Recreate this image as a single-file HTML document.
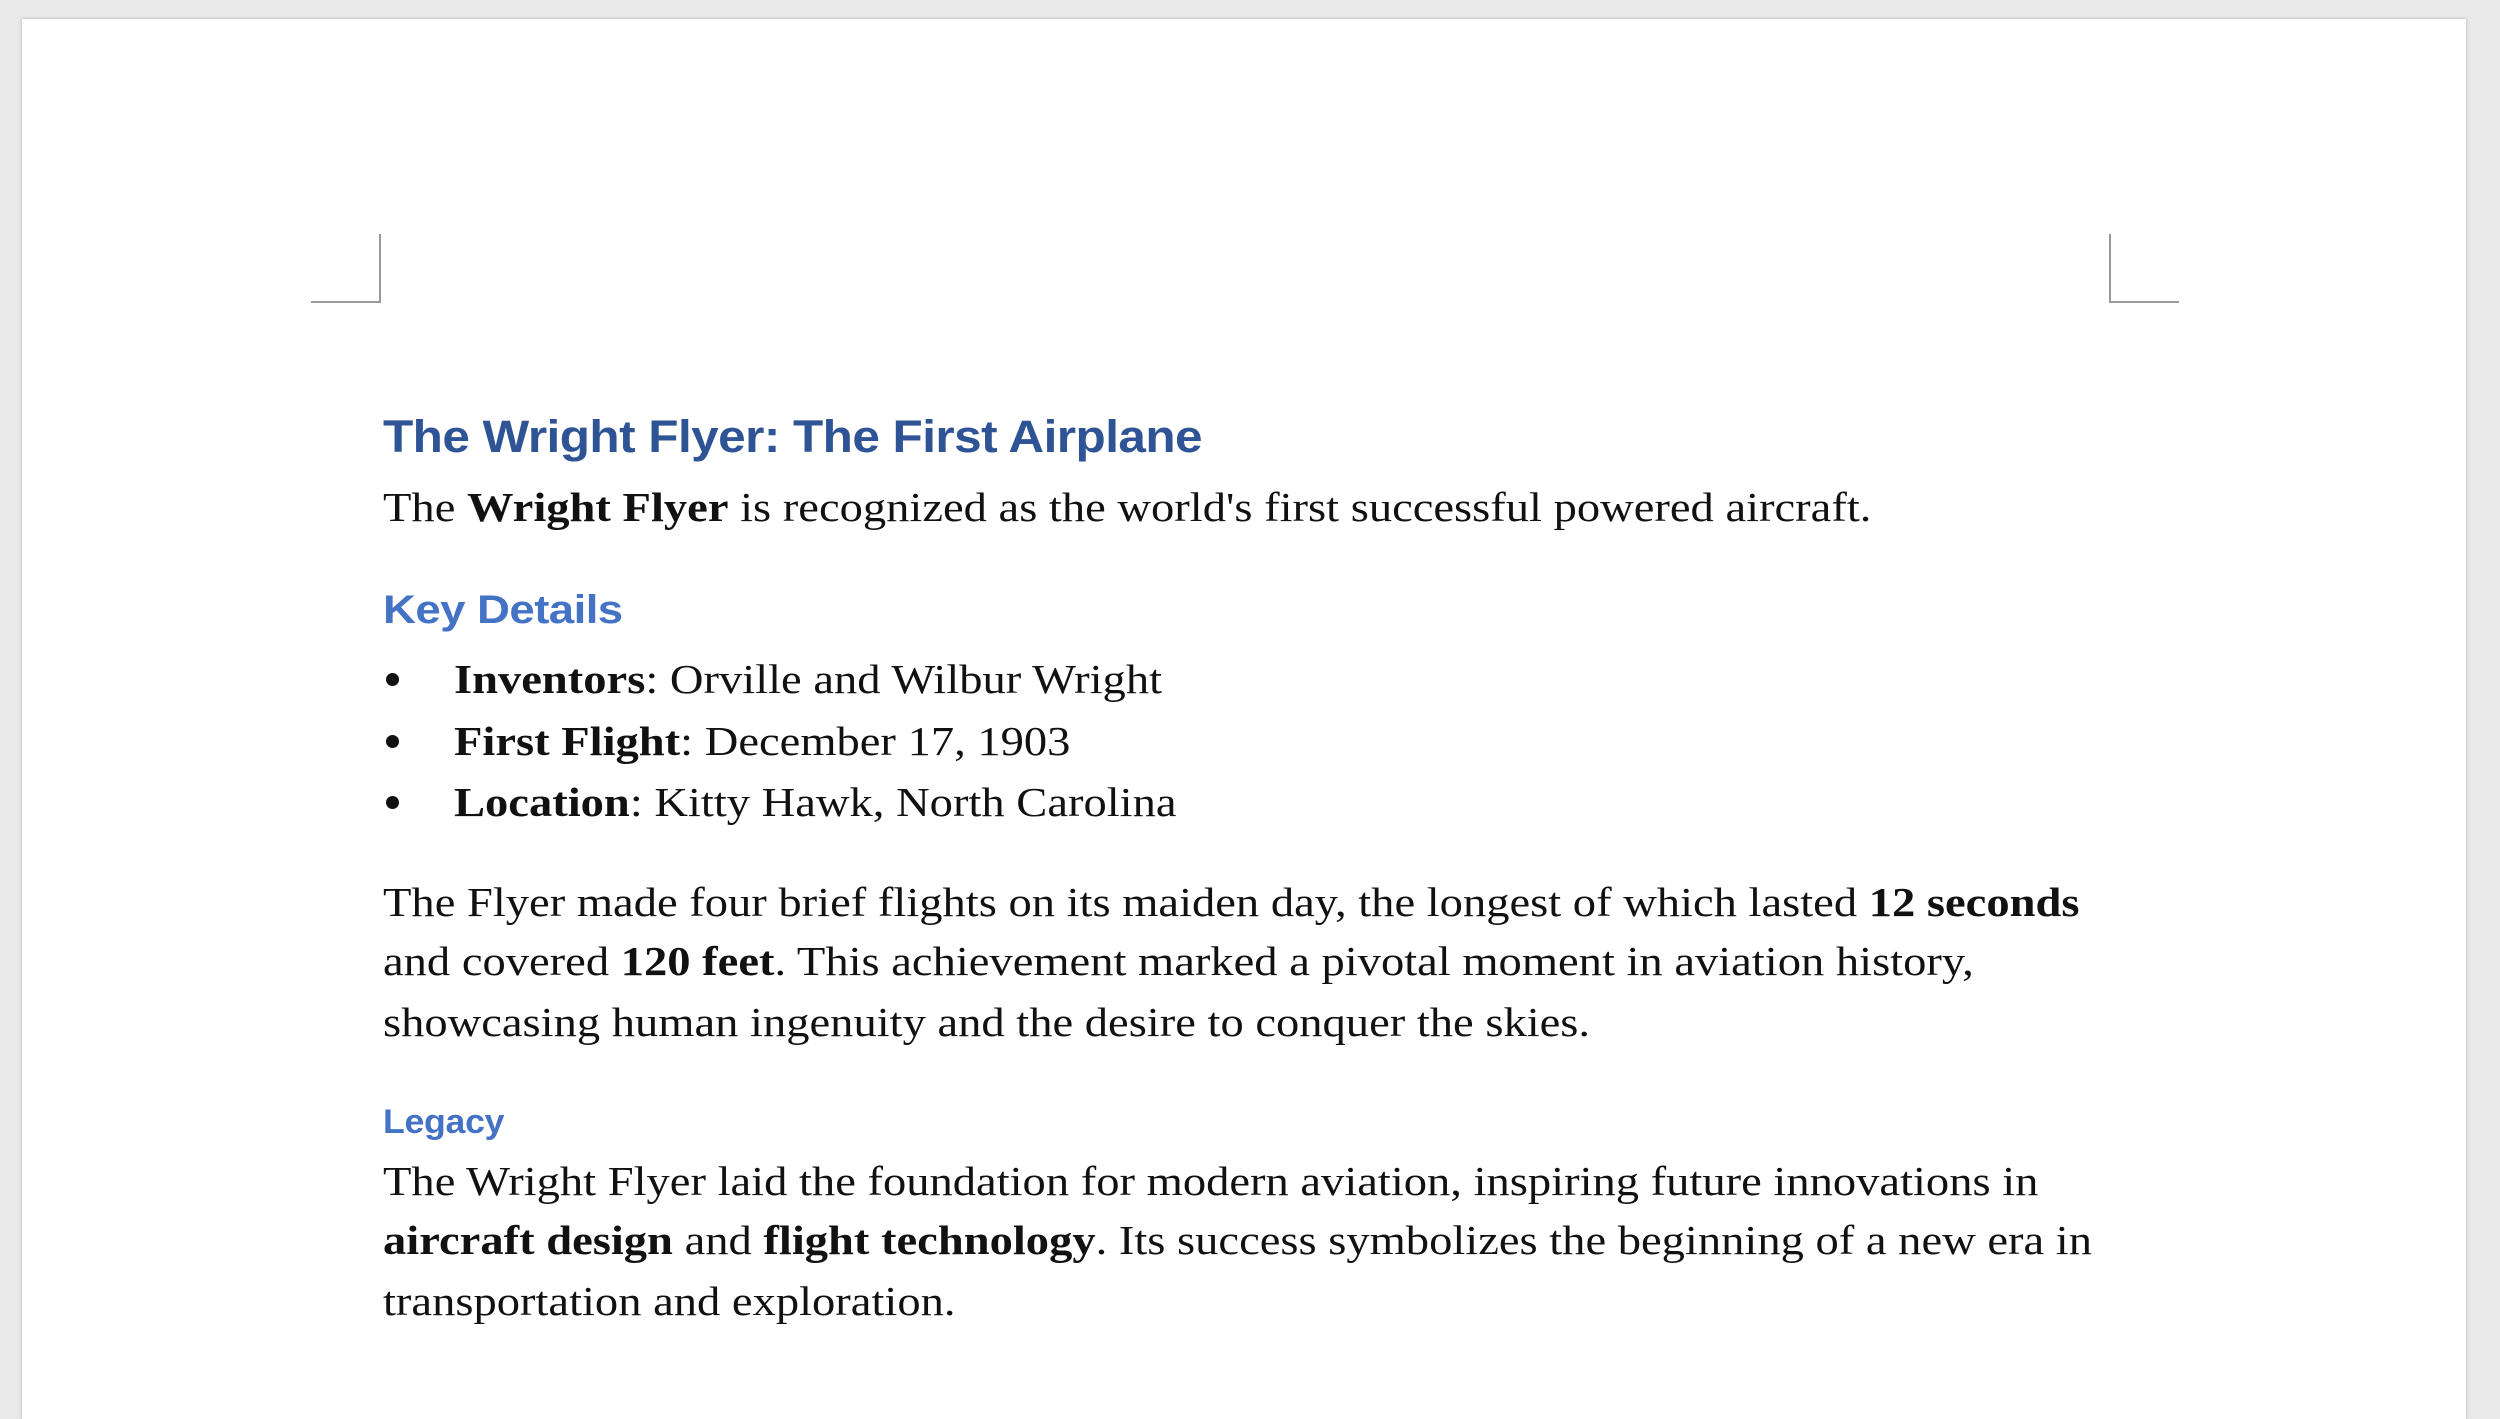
<!DOCTYPE html>
<html><head><meta charset="utf-8"><style>
html,body{margin:0;padding:0;}
body{width:2500px;height:1381px;background:#e9e9e9;position:relative;overflow:hidden;}
.page{position:absolute;left:22px;top:19px;width:2444px;height:1400px;background:#fff;box-shadow:0 0 3px rgba(0,0,0,0.25);}
.l{position:absolute;left:383px;white-space:nowrap;height:60px;line-height:60px;font-family:"Liberation Serif",serif;font-size:41px;color:#111;transform:scaleX(1.135);transform-origin:0 50%;}
.h{font-family:"Liberation Sans",sans-serif;font-weight:bold;}
.m{position:absolute;background:#9a9a9a;}
b{font-weight:bold;}
.dot{position:absolute;left:386px;width:13px;height:13px;border-radius:50%;background:#111;}
</style></head><body>
<div class="page"></div>
<div class="m" style="left:379px;top:234px;width:2px;height:69px"></div>
<div class="m" style="left:311px;top:301px;width:70px;height:2px"></div>
<div class="m" style="left:2109px;top:234px;width:2px;height:69px"></div>
<div class="m" style="left:2109px;top:301px;width:70px;height:2px"></div>

<div class="l h" style="top:407px;font-size:45px;color:#2f5496;letter-spacing:-0.5px;transform:scaleX(1.10)">The Wright Flyer: The First Airplane</div>
<div class="l" style="top:477px">The <b>Wright Flyer</b> is recognized as the world's first successful powered aircraft.</div>
<div class="l h" style="top:580px;font-size:40px;color:#4472c4;letter-spacing:-0.5px;transform:scaleX(1.14)">Key Details</div>
<div class="dot" style="top:673px"></div>
<div class="l" style="top:649px;left:454px"><b>Inventors</b>: Orville and Wilbur Wright</div>
<div class="dot" style="top:735px"></div>
<div class="l" style="top:711px;left:454px"><b>First Flight</b>: December 17, 1903</div>
<div class="dot" style="top:796px"></div>
<div class="l" style="top:772px;left:454px"><b>Location</b>: Kitty Hawk, North Carolina</div>
<div class="l" style="top:872px">The Flyer made four brief flights on its maiden day, the longest of which lasted <b>12 seconds</b></div>
<div class="l" style="top:931px">and covered <b>120 feet</b>. This achievement marked a pivotal moment in aviation history,</div>
<div class="l" style="top:992px">showcasing human ingenuity and the desire to conquer the skies.</div>
<div class="l h" style="top:1092px;font-size:34px;color:#4472c4;letter-spacing:-0.3px;transform:scaleX(1.05)">Legacy</div>
<div class="l" style="top:1151px">The Wright Flyer laid the foundation for modern aviation, inspiring future innovations in</div>
<div class="l" style="top:1210px"><b>aircraft design</b> and <b>flight technology</b>. Its success symbolizes the beginning of a new era in</div>
<div class="l" style="top:1271px">transportation and exploration.</div>
</body></html>
